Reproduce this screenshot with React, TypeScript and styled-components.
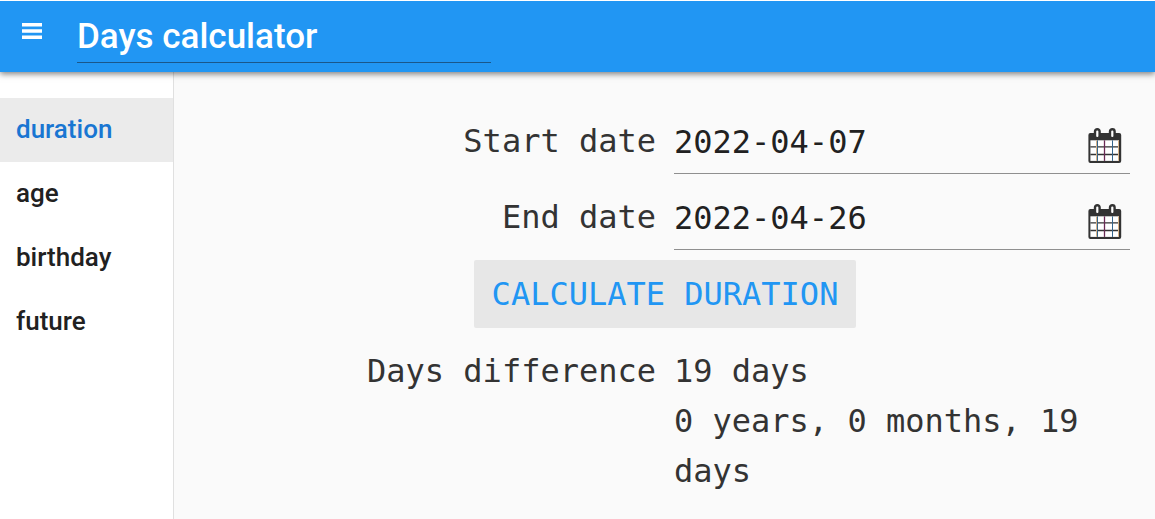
import React, { useState } from "react";
import styled, { createGlobalStyle } from "styled-components";

const GlobalStyle = createGlobalStyle`
  *, *::before, *::after { box-sizing: border-box; }
  body {
    margin: 0;
    background: #fafafa;
    font-family: Roboto, "Liberation Sans", sans-serif;
  }
`;

const mono = `Consolas, "DejaVu Sans Mono", "Liberation Mono", monospace`;

const Page = styled.div`
  display: flex;
  flex-direction: column;
  min-height: 100vh;
`;

const AppBar = styled.header`
  position: relative;
  z-index: 1;
  display: flex;
  align-items: flex-start;
  gap: 32px;
  height: 72px;
  padding: 8px 20px 0;
  border-top: 1px solid #fff;
  background: #2196f3;
  box-shadow: 0 2px 6px rgba(0, 0, 0, 0.5);
`;

const MenuButton = styled.button`
  display: flex;
  align-items: center;
  justify-content: center;
  width: 25px;
  height: 44px;
  padding: 0 1px 0 0;
  border: 0;
  background: none;
  color: #fff;
  cursor: pointer;
`;

const TitleInput = styled.input`
  flex: 0 1 414px;
  min-width: 0;
  height: 54px;
  padding: 2px 0 0;
  border: 0;
  border-bottom: 1px solid #1a578a;
  outline: 0;
  background: transparent;
  color: #fff;
  font: 500 35px Roboto, "Liberation Sans", sans-serif;
`;

const Body = styled.div`
  display: flex;
  flex: 1;
`;

const Sidebar = styled.nav`
  flex: 0 0 174px;
  display: flex;
  flex-direction: column;
  padding-top: 26px;
  border-right: 1px solid #e0e0e0;
  background: #fff;
`;

const NavLink = styled.a<{ $active?: boolean }>`
  padding: 0 16px 2px;
  background: ${(p) => (p.$active ? "#ebebeb" : "transparent")};
  color: ${(p) => (p.$active ? "#1976d2" : "#212121")};
  font-size: 26px;
  font-weight: 500;
  line-height: 62px;
  text-decoration: none;
`;

const Main = styled.main`
  flex: 1;
  min-width: 0;
  padding: 36px 25px 20px 26px;
  color: #333;
  font-family: ${mono};
  font-size: 32px;
  line-height: 50px;
`;

const Row = styled.div`
  display: grid;
  grid-template-columns: minmax(0, 1fr) minmax(0, 1fr);
  column-gap: 18px;
`;

const FieldRow = styled(Row)`
  height: 66px;
  margin-bottom: 10px;
`;

const Label = styled.label`
  padding-top: 8px;
  text-align: right;
`;

const ResultLabel = styled.div`
  text-align: right;
`;

const Field = styled.div`
  display: flex;
  align-items: center;
  border-bottom: 1px solid #8f8f8f;
`;

const DateInput = styled.input`
  flex: 1;
  min-width: 0;
  height: 64px;
  padding: 2px 0 0;
  border: 0;
  outline: 0;
  background: transparent;
  color: #212121;
  font: 32px ${mono};
`;

const PickerButton = styled.button`
  display: flex;
  padding: 10px 8px 0;
  border: 0;
  background: none;
  cursor: pointer;
`;

const Actions = styled.div`
  display: flex;
  justify-content: center;
  margin-bottom: 18px;
`;

const CalculateButton = styled.button`
  height: 68px;
  padding: 0 18px;
  border: 0;
  border-radius: 2px;
  background: #e7e7e7;
  color: #2196f3;
  font: 32px ${mono};
  text-transform: uppercase;
  cursor: pointer;
`;

const MenuIcon = () => (
  <svg width="20" height="16" viewBox="0 0 20 16" aria-hidden="true">
    <path fill="currentColor" d="M0 0h20v3.5H0zM0 6.2h20v3.6H0zM0 12.4h20v3.6H0z" />
  </svg>
);

const CalendarIcon = () => (
  <svg width="34" height="36" viewBox="0 0 34 36" aria-hidden="true">
    <rect x="0.4" y="5" width="32.8" height="30" rx="2" fill="#333" />
    <path fill="#fff" d="M2.4 12.3h28.6v20.6H2.4z" />
    <path stroke="#333" strokeWidth="1.3" d="M2.4 18.9h28.6M2.4 26.5h28.6" />
    <path stroke="#d8b48a" d="M8.5 12.3v20.6M30.5 12.3v20.6" />
    <path stroke="#35658c" d="M9.5 12.3v20.6M24.5 12.3v20.6" />
    <path stroke="#6a2a55" strokeWidth="1.3" d="M16.5 12.3v20.6" />
    <rect x="7" y="1.2" width="4.6" height="9" rx="2.2" fill="#fff" stroke="#333" strokeWidth="2.4" />
    <rect x="22" y="1.2" width="4.6" height="9" rx="2.2" fill="#fff" stroke="#333" strokeWidth="2.4" />
  </svg>
);

const pages = ["duration", "age", "birthday", "future"];

const DAY = 86400000;

function difference(start: string, end: string) {
  const a = new Date(start);
  const b = new Date(end);
  const days = Math.round((b.getTime() - a.getTime()) / DAY);
  let months =
    (b.getUTCFullYear() - a.getUTCFullYear()) * 12 + b.getUTCMonth() - a.getUTCMonth();
  if (b.getUTCDate() < a.getUTCDate()) months -= 1;
  const anchor = new Date(a);
  anchor.setUTCMonth(anchor.getUTCMonth() + months);
  const rest = Math.round((b.getTime() - anchor.getTime()) / DAY);
  return { days, text: `${Math.floor(months / 12)} years, ${months % 12} months, ${rest} days` };
}

interface DateFieldProps {
  id: string;
  label: string;
  value: string;
  onChange: (value: string) => void;
}

const DateField = ({ id, label, value, onChange }: DateFieldProps) => (
  <FieldRow>
    <Label htmlFor={id}>{label}</Label>
    <Field>
      <DateInput id={id} value={value} onChange={(e) => onChange(e.target.value)} />
      <PickerButton type="button" aria-label={`Pick ${label.toLowerCase()}`}>
        <CalendarIcon />
      </PickerButton>
    </Field>
  </FieldRow>
);

export default function App() {
  const [title, setTitle] = useState("Days calculator");
  const [start, setStart] = useState("2022-04-07");
  const [end, setEnd] = useState("2022-04-26");
  const [result, setResult] = useState(() => difference(start, end));

  return (
    <Page>
      <GlobalStyle />
      <AppBar>
        <MenuButton type="button" aria-label="Menu">
          <MenuIcon />
        </MenuButton>
        <TitleInput aria-label="Title" value={title} onChange={(e) => setTitle(e.target.value)} />
      </AppBar>
      <Body>
        <Sidebar>
          {pages.map((page, i) => (
            <NavLink key={page} href={`#${page}`} $active={i === 0}>
              {page}
            </NavLink>
          ))}
        </Sidebar>
        <Main>
          <DateField id="start" label="Start date" value={start} onChange={setStart} />
          <DateField id="end" label="End date" value={end} onChange={setEnd} />
          <Actions>
            <CalculateButton type="button" onClick={() => setResult(difference(start, end))}>
              Calculate duration
            </CalculateButton>
          </Actions>
          <Row>
            <ResultLabel>Days difference</ResultLabel>
            <div>
              <div>{result.days} days</div>
              <div>{result.text}</div>
            </div>
          </Row>
        </Main>
      </Body>
    </Page>
  );
}
